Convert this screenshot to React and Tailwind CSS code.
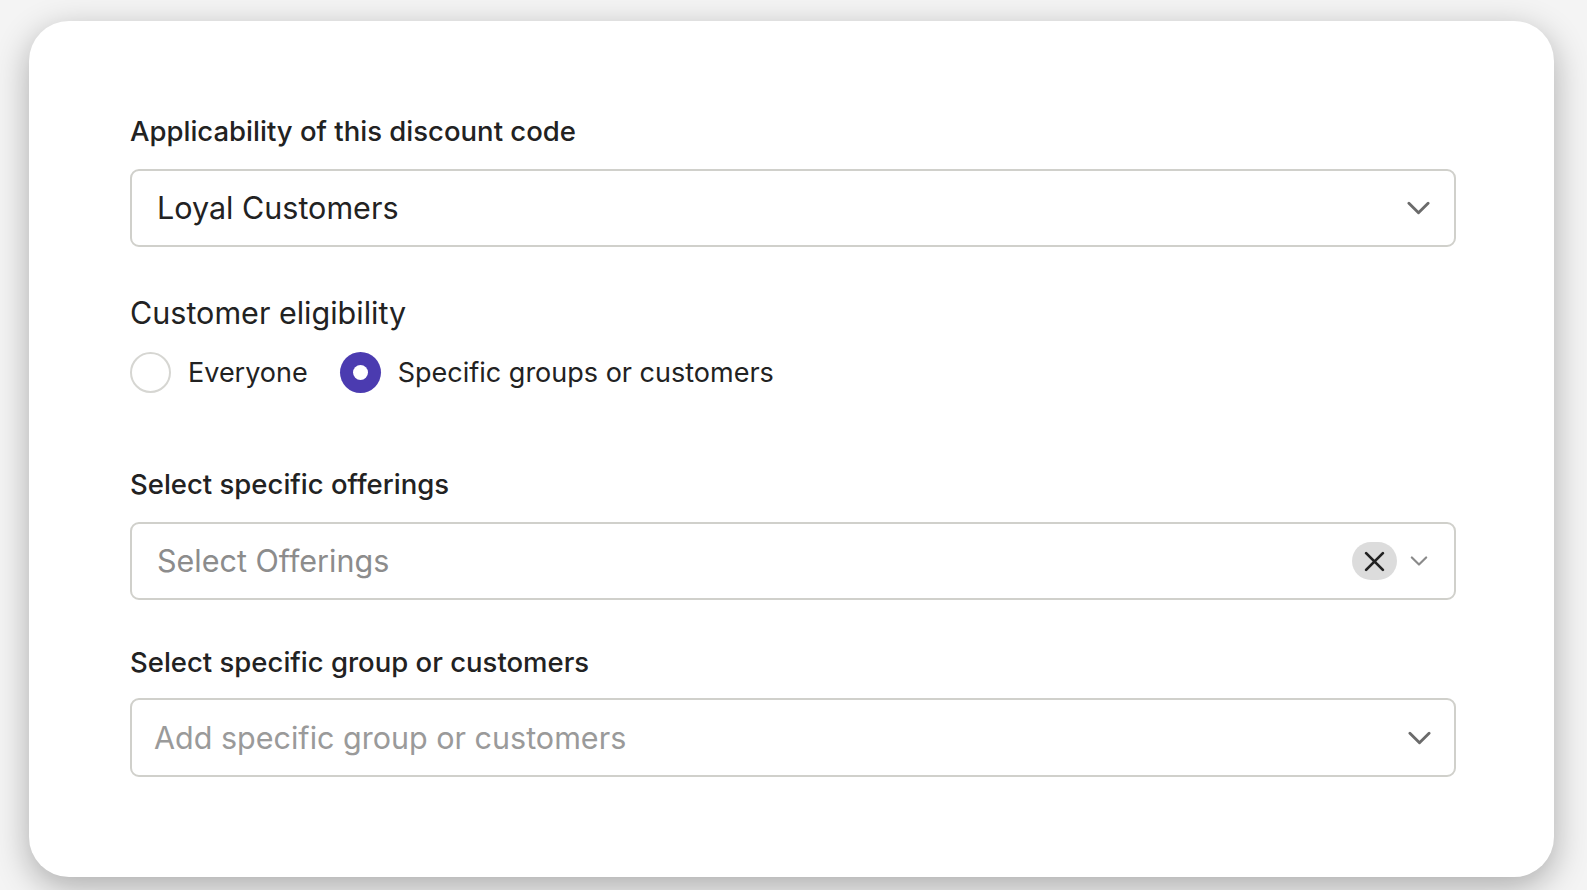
import React, { useState } from 'react';

const Chevron = ({ className }) => (
  <svg viewBox="0 0 24 14" fill="none" className={className}>
    <path d="M2 2l10 10L22 2" stroke="currentColor" strokeWidth="3" strokeLinecap="round" strokeLinejoin="round" />
  </svg>
);

const Radio = ({ checked, label, onClick }) => (
  <button type="button" onClick={onClick} className="flex items-center gap-[17px]">
    {checked ? (
      <span className="w-[41px] h-[41px] rounded-full bg-[#4b3bb0] flex items-center justify-center">
        <span className="w-[15px] h-[15px] rounded-full bg-white" />
      </span>
    ) : (
      <span className="w-[41px] h-[41px] rounded-full border-2 border-[#d6d6d2] bg-white" />
    )}
    <span className="text-[27px] leading-[34px] text-[#222]">{label}</span>
  </button>
);

const App = () => {
  const [eligibility, setEligibility] = useState('specific');

  return (
    <div className="w-full h-[890px] bg-[#f4f4f4] pt-[21px] pl-[29px] pr-[33px] pb-[13px] font-['Inter',sans-serif]">
      <div className="h-[856px] bg-white rounded-[40px] shadow-[0_10px_34px_rgba(0,0,0,0.3)] pl-[101px] pr-[98px] pt-[94px]">
        <label className="block text-[27.5px] leading-[32px] font-medium text-[#222]">
          Applicability of this discount code
        </label>
        <div className="mt-[22px] h-[78px] border-[2.5px] border-[#d0d0cb] rounded-[9px] flex items-center pl-[25px] pr-[24px]">
          <span className="flex-1 text-[30.5px] text-[#222]">Loyal Customers</span>
          <Chevron className="w-[23px] h-[14px] text-[#6b6b6b]" />
        </div>

        <div className="mt-[49px] text-[30.5px] leading-[34px] text-[#222]">Customer eligibility</div>
        <div className="mt-[22px] flex items-center gap-[32px]">
          <Radio checked={eligibility === 'everyone'} label="Everyone" onClick={() => setEligibility('everyone')} />
          <Radio checked={eligibility === 'specific'} label="Specific groups or customers" onClick={() => setEligibility('specific')} />
        </div>

        <label className="mt-[75px] block text-[27.5px] leading-[32px] font-medium text-[#222]">
          Select specific offerings
        </label>
        <div className="mt-[22px] h-[78px] border-[2.5px] border-[#d0d0cb] rounded-[9px] flex items-center pl-[25px] pr-[26px]">
          <span className="flex-1 text-[30.5px] text-[#8c8c8c]">Select Offerings</span>
          <span className="w-[45px] h-[38px] rounded-full bg-[#dcdcdc] flex items-center justify-center">
            <svg viewBox="0 0 20 20" className="w-[21px] h-[21px]" fill="none">
              <path d="M2 2l16 16M18 2L2 18" stroke="#222" strokeWidth="2.6" strokeLinecap="round" />
            </svg>
          </span>
          <Chevron className="ml-[13px] w-[18px] h-[10px] text-[#8a8a8a]" />
        </div>

        <label className="mt-[46px] block text-[27.5px] leading-[32px] font-medium text-[#222]">
          Select specific group or customers
        </label>
        <div className="mt-[20px] h-[79px] border-[2.5px] border-[#d0d0cb] rounded-[9px] flex items-center pl-[22px] pr-[23px]">
          <span className="flex-1 text-[30.5px] text-[#9a9a9a]">Add specific group or customers</span>
          <Chevron className="w-[23px] h-[14px] text-[#6b6b6b]" />
        </div>
      </div>
    </div>
  );
};

export default App;
